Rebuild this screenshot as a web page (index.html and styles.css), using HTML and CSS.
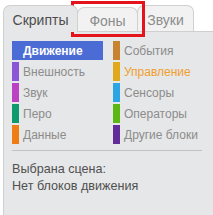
FILE: index.html
```html
<!DOCTYPE html>
<html lang="ru">
<head>
<meta charset="utf-8">
<link rel="stylesheet" href="styles.css">
</head>
<body>
<div class="tabs">
  <div class="tab active">Скрипты</div>
  <div class="tab tab-bg">Фоны</div>
  <div class="tab tab-snd">Звуки</div>
</div>
<div class="panel">
  <div class="cats">
    <div class="cat sel" style="--c:#4a6cd4">Движение</div>
    <div class="cat" style="--c:#c88330">События</div>
    <div class="cat" style="--c:#8a55d7">Внешность</div>
    <div class="cat hot" style="--c:#e1a91a">Управление</div>
    <div class="cat" style="--c:#bb42c3">Звук</div>
    <div class="cat" style="--c:#2ca5e2">Сенсоры</div>
    <div class="cat" style="--c:#0e9a6c">Перо</div>
    <div class="cat" style="--c:#5cb712">Операторы</div>
    <div class="cat" style="--c:#ee7d16">Данные</div>
    <div class="cat" style="--c:#632d99">Другие блоки</div>
  </div>
  <div class="sep"></div>
  <div class="info">
    <div>Выбрана сцена:</div>
    <div>Нет блоков движения</div>
  </div>
</div>
<div class="mark"></div>
</body>
</html>
```
FILE: styles.css
```css
html, body {
  margin: 0;
  padding: 0;
  background: #ffffff;
  font-family: "Liberation Sans", Arial, sans-serif;
}
body {
  width: 213px;
  height: 215px;
  overflow: hidden;
  position: relative;
}
.tabs {
  display: flex;
  align-items: flex-end;
  padding-left: 3px;
  height: 31px;
  box-sizing: border-box;
}
.tab {
  box-sizing: border-box;
  height: 26px;
  border: 1px solid #d0d0d0;
  border-bottom: none;
  border-radius: 7px 7px 0 0;
  background: #f2f2f2;
  color: #8c8c8c;
  font-size: 14px;
  display: flex;
  align-items: center;
  justify-content: center;
  padding-top: 2px;
}
.tab.active {
  width: 75px;
  background: #e6e7e8;
  color: #4e4e4e;
  position: relative;
  z-index: 1;
  height: 27px;
  margin-bottom: -1px;
}
.tab-bg {
  width: 61px;
  height: 24px;
  margin-left: -1px;
}
.tab-snd {
  width: 57px;
  margin-left: -1px;
}
.panel {
  margin-left: 3px;
  height: 184px;
  background: #e6e7e8;
  border-top: 1px solid #cfcfcf;
  border-left: 1px solid #cfcfcf;
  box-sizing: border-box;
  padding: 9px 0 0 8px;
}
.cats {
  display: grid;
  grid-template-columns: 91px 91px;
  column-gap: 10px;
  row-gap: 2px;
}
.cat {
  height: 19px;
  display: flex;
  align-items: center;
  font-size: 12px;
  color: #8c8c8c;
  padding-left: 11px;
  background: linear-gradient(to right, var(--c) 7px, transparent 7px);
}
.cat.sel {
  background: var(--c);
  color: #ffffff;
  font-weight: bold;
}
.cat.hot {
  color: #f0a030;
}
.sep {
  margin-top: 6px;
  width: 190px;
  height: 1px;
  background: #c2c2c2;
}
.info {
  margin-top: 10px;
  font-size: 12.6px;
  line-height: 17px;
  color: #505050;
}
.mark {
  position: absolute;
  left: 71px;
  top: 1px;
  width: 74px;
  height: 36px;
  box-sizing: border-box;
  border: 3px solid #e5141c;
}
```
